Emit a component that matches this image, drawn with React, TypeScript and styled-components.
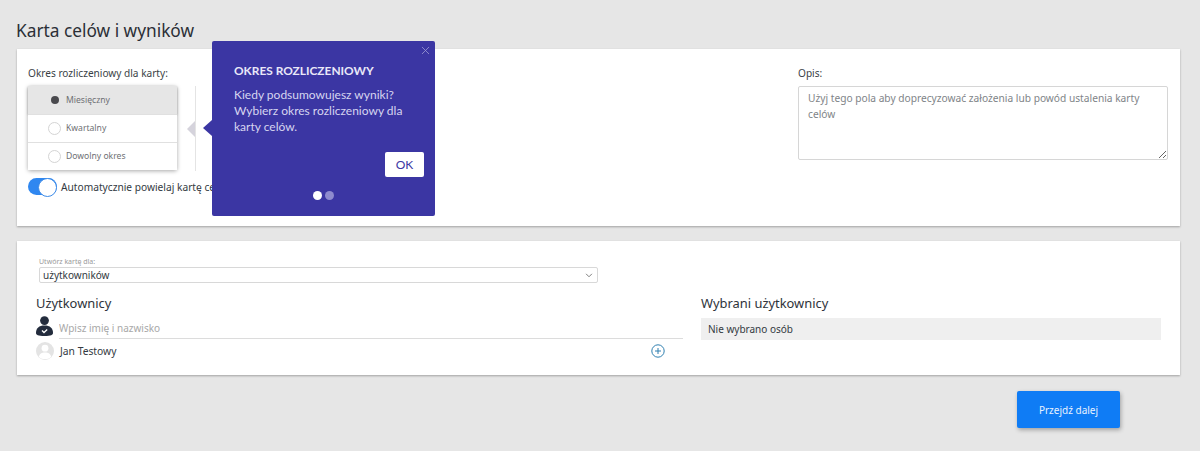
import styled, { createGlobalStyle } from "styled-components";
import { X } from "lucide-react";

const GlobalStyle = createGlobalStyle`
  html, body {
    margin: 0;
    padding: 0;
    background: #e6e6e6;
    font-family: "Noto Sans", "Open Sans", sans-serif;
    color: #333a42;
  }
  * { box-sizing: border-box; }
`;

const periods = [
  { label: "Miesięczny", selected: true },
  { label: "Kwartalny", selected: false },
  { label: "Dowolny okres", selected: false },
];

const App = () => {
  return (
    <Page>
      <GlobalStyle />
      <Title>Karta celów i wyników</Title>
      <SettingsCard>
        <PeriodColumn>
          <FieldLabel>Okres rozliczeniowy dla karty:</FieldLabel>
          <PeriodRow>
            <PeriodList>
              {periods.map((p) => (
                <PeriodOption key={p.label} $selected={p.selected}>
                  <Radio $selected={p.selected} />
                  {p.label}
                </PeriodOption>
              ))}
            </PeriodList>
            <Divider>
              <GreyArrow />
            </Divider>
          </PeriodRow>
          <ToggleRow>
            <Toggle />
            <span>Automatycznie powielaj kartę celów</span>
          </ToggleRow>
        </PeriodColumn>
        <DescriptionColumn>
          <FieldLabel>Opis:</FieldLabel>
          <Description placeholder="Użyj tego pola aby doprecyzować założenia lub powód ustalenia karty celów" />
        </DescriptionColumn>
      </SettingsCard>
      <UsersCard>
        <SelectField>
          <SelectLabel>Utwórz kartę dla:</SelectLabel>
          <SelectBox>
            użytkowników
            <svg width="8" height="5" viewBox="0 0 9 6" fill="none" stroke="#666" strokeWidth="1">
              <path d="M1 1l3.500 3.500L8 1" />
            </svg>
          </SelectBox>
        </SelectField>
        <UsersGrid>
          <div>
            <SectionTitle>Użytkownicy</SectionTitle>
            <SearchRow>
              <svg width="17" height="20" viewBox="0 0 17 20">
                <circle cx="8.500" cy="4.600" r="4.400" fill="#232c3d" />
                <path d="M0 17c0-5 3-7.500 8.500-7.500S17 12 17 17c0 2-2 3-8.500 3S0 19 0 17z" fill="#232c3d" />
                <path d="M6 14.500l2 2 3.200-3" fill="none" stroke="#fff" strokeWidth="1.300" />
              </svg>
              <SearchInput placeholder="Wpisz imię i nazwisko" />
            </SearchRow>
            <UserRow>
              <Avatar>
                <svg width="18" height="18" viewBox="0 0 18 18" fill="#fff">
                  <circle cx="9" cy="6.200" r="3.400" />
                  <path d="M2.800 15c.4-3.400 3-4.600 6.200-4.600s5.800 1.200 6.200 4.600C13.500 16.500 11.300 17.200 9 17.200S4.500 16.500 2.800 15z" />
                </svg>
              </Avatar>
              <UserName>Jan Testowy</UserName>
              <svg width="14" height="14" viewBox="0 0 14 14" fill="none" stroke="#2f7fb0" strokeWidth="1">
                <circle cx="7" cy="7" r="6.200" />
                <path d="M7 4v6M4 7h6" />
              </svg>
            </UserRow>
          </div>
          <div>
            <SectionTitle>Wybrani użytkownicy</SectionTitle>
            <EmptySelection>Nie wybrano osób</EmptySelection>
          </div>
        </UsersGrid>
      </UsersCard>
      <Footer>
        <NextButton>Przejdź dalej</NextButton>
      </Footer>
      <Popover>
        <CloseButton>
          <X size={13} strokeWidth={1.5} />
        </CloseButton>
        <PopoverTitle>OKRES ROZLICZENIOWY</PopoverTitle>
        <PopoverText>
          Kiedy podsumowujesz wyniki?
          <br />
          Wybierz okres rozliczeniowy dla
          <br />
          karty celów.
        </PopoverText>
        <OkRow>
          <OkButton>OK</OkButton>
        </OkRow>
        <Dots>
          <Dot $active />
          <Dot />
        </Dots>
      </Popover>
    </Page>
  );
};

const Page = styled.div`
  position: relative;
  width: 1200px;
  height: 451px;
  padding: 0 20px 0 17px;
  overflow: hidden;
`;

const Title = styled.h1`
  margin: 0 0 0 -1px;
  height: 49px;
  padding-top: 19px;
  font-size: 17.300px;
  line-height: 24px;
  font-weight: 400;
  color: #2b2f36;
`;

const Card = styled.section`
  background: #fff;
  box-shadow: 0 1px 2px rgba(0, 0, 0, 0.3);
`;

const SettingsCard = styled(Card)`
  height: 177px;
  padding: 17px 12px 0 11px;
  display: flex;
  justify-content: space-between;
`;

const PeriodColumn = styled.div`
  width: 400px;
`;

const FieldLabel = styled.div`
  font-size: 10.100px;
  line-height: 14px;
  margin-bottom: 6px;
  color: #3a3f46;
`;

const PeriodRow = styled.div`
  display: flex;
`;

const PeriodList = styled.div`
  width: 149px;
  height: 84px;
  margin-bottom: 1px;
  border-radius: 2px;
  box-shadow: 0 1px 4px rgba(0, 0, 0, 0.35);
  background: #fff;
`;

const PeriodOption = styled.div<{ $selected: boolean }>`
  height: 28px;
  display: flex;
  align-items: center;
  gap: 5px;
  padding-left: 20px;
  font-size: 8.600px;
  color: #6e7074;
  background: ${(p) => (p.$selected ? "#e6e6e6" : "#fff")};
  box-shadow: ${(p) => (p.$selected ? "0 1px 2px rgba(0,0,0,.25)" : "none")};
  & + & {
    border-top: 1px solid #e0e0e0;
    padding-bottom: 1px;
  }
`;

const Radio = styled.span<{ $selected: boolean }>`
  width: 13px;
  height: 13px;
  border-radius: 50%;
  border: 1px solid ${(p) => (p.$selected ? "transparent" : "#d4d4d4")};
  display: flex;
  align-items: center;
  justify-content: center;
  &::after {
    content: "";
    display: ${(p) => (p.$selected ? "block" : "none")};
    width: 8px;
    height: 8px;
    border-radius: 50%;
    background: #4a4a4e;
  }
`;

const Divider = styled.div`
  position: relative;
  margin-left: 18px;
  width: 1px;
  height: 85px;
  background: #e4e4e4;
`;

const GreyArrow = styled.span`
  position: absolute;
  left: -8px;
  top: 35px;
  border-top: 8px solid transparent;
  border-bottom: 8px solid transparent;
  border-right: 8px solid #d5d3dc;
`;

const ToggleRow = styled.div`
  display: flex;
  align-items: center;
  gap: 4px;
  margin-top: 7px;
  font-size: 10.200px;
  color: #333a42;
  white-space: nowrap;
`;

const Toggle = styled.span`
  position: relative;
  width: 29px;
  height: 17px;
  border-radius: 9px;
  background: #2f87f0;
  &::after {
    content: "";
    position: absolute;
    right: 0;
    top: 0;
    width: 17px;
    height: 17px;
    border-radius: 50%;
    background: #fff;
    border: 1px solid #3d8be8;
  }
`;

const DescriptionColumn = styled.div`
  width: 370px;
`;

const Description = styled.textarea`
  display: block;
  width: 370px;
  height: 74px;
  padding: 3px 9px;
  border: 1px solid #d6d6d6;
  border-radius: 2px;
  font-family: inherit;
  font-size: 10.200px;
  line-height: 16px;
  &::placeholder {
    color: #808488;
  }
`;

const UsersCard = styled(Card)`
  margin-top: 15px;
  height: 134px;
  padding: 16px 19px 0 19px;
`;

const SelectField = styled.div`
  width: 559px;
  margin-left: 3px;
`;

const SelectLabel = styled.div`
  font-size: 7px;
  line-height: 10px;
  color: #9a9a9a;
`;

const SelectBox = styled.div`
  height: 16px;
  border: 1px solid #d8d8d8;
  border-radius: 2px;
  padding: 0 4px 0 3px;
  display: flex;
  align-items: center;
  justify-content: space-between;
  font-size: 10px;
  color: #333a42;
`;

const UsersGrid = styled.div`
  display: grid;
  grid-template-columns: 647px 460px;
  column-gap: 18px;
  margin-top: 12px;
`;

const SectionTitle = styled.h2`
  margin: 0;
  font-size: 12.900px;
  line-height: 17px;
  font-weight: 400;
  color: #2f343b;
`;

const SearchRow = styled.div`
  display: flex;
  align-items: center;
  gap: 6px;
  height: 26px;
  margin-top: 1px;
`;

const SearchInput = styled.input`
  flex: 1;
  height: 26px;
  padding: 4px 0 0;
  border: none;
  border-bottom: 1px solid #dcdcdc;
  font-family: inherit;
  font-size: 10px;
  outline: none;
  &::placeholder {
    color: #a8a8a8;
  }
`;

const UserRow = styled.div`
  display: flex;
  align-items: center;
  padding-right: 18px;
  height: 24px;
`;

const Avatar = styled.span`
  width: 18px;
  height: 18px;
  border-radius: 50%;
  background: #e4e4e4;
  overflow: hidden;
  display: flex;
  margin-right: 6px;
`;

const UserName = styled.span`
  flex: 1;
  font-size: 10.300px;
  color: #333a42;
`;

const EmptySelection = styled.div`
  margin-top: 6px;
  height: 22px;
  padding-left: 7px;
  display: flex;
  align-items: center;
  background: #efefef;
  font-size: 10px;
  color: #333a42;
`;

const Footer = styled.div`
  margin-top: 16px;
  padding-right: 60px;
  display: flex;
  justify-content: flex-end;
`;

const NextButton = styled.button`
  width: 103px;
  height: 37px;
  border: none;
  border-radius: 2px;
  background: #0f7cf5;
  color: #e8f2ff;
  font-family: inherit;
  font-size: 10px;
  box-shadow: 1px 2px 4px rgba(0, 0, 0, 0.3);
`;

const Popover = styled.div`
  position: absolute;
  left: 212px;
  top: 41px;
  width: 223px;
  height: 175px;
  padding: 22px 11px 0 22px;
  border-radius: 2px;
  background: #3b36a3;
  color: #e4e3f5;
  font-family: Lato, sans-serif;
  &::before {
    content: "";
    position: absolute;
    left: -9px;
    top: 79px;
    border-top: 8px solid transparent;
    border-bottom: 8px solid transparent;
    border-right: 9px solid #3b36a3;
  }
`;

const CloseButton = styled.span`
  position: absolute;
  right: 3px;
  top: 3px;
  color: #9d9ad4;
  display: flex;
`;

const PopoverTitle = styled.div`
  font-size: 11.900px;
  line-height: 16px;
  font-weight: 700;
  color: #e9e8f8;
`;

const PopoverText = styled.p`
  margin: 8px 0 0;
  font-size: 12px;
  line-height: 16px;
  color: #d6d5f0;
`;

const OkRow = styled.div`
  margin-top: 17px;
  display: flex;
  justify-content: flex-end;
`;

const OkButton = styled.button`
  width: 39px;
  height: 25px;
  border: none;
  border-radius: 2px;
  background: #fff;
  color: #3b36a3;
  font-family: inherit;
  font-size: 12px;
`;

const Dots = styled.div`
  position: absolute;
  left: 0;
  right: 0;
  bottom: 16px;
  display: flex;
  justify-content: center;
  gap: 3px;
`;

const Dot = styled.span<{ $active?: boolean }>`
  width: 9px;
  height: 9px;
  border-radius: 50%;
  background: ${(p) => (p.$active ? "#fff" : "#8e8bce")};
`;

export default App;
